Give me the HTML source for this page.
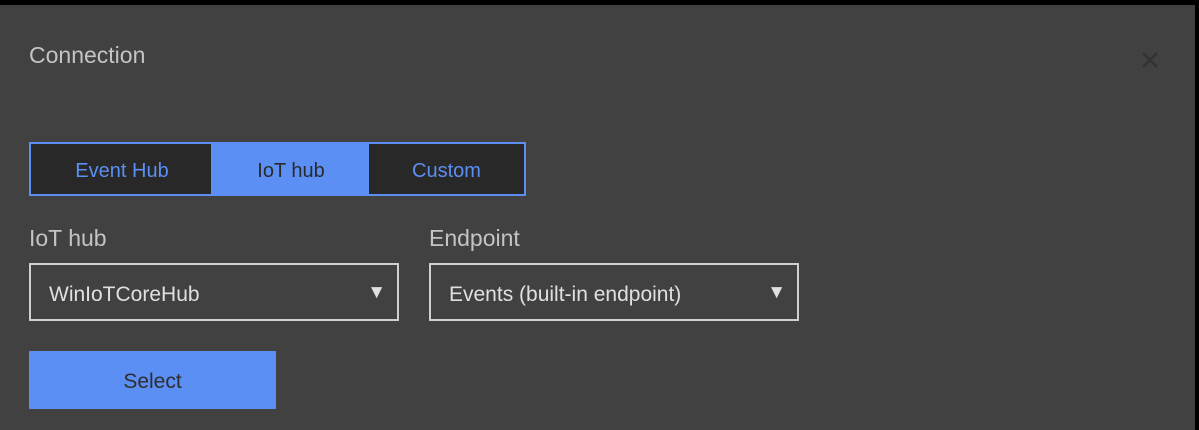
<!DOCTYPE html>
<html><head><style>
body{margin:0;width:1199px;height:430px;background:#000;overflow:hidden;font-family:"Liberation Sans",sans-serif}
.p{position:absolute;left:0;top:5px;width:1195px;height:425px;background:#414141}
.a{position:absolute}
.t{color:#c4c4c4;font-size:23px}
.tab{position:absolute;top:142px;height:54px;box-sizing:border-box;border:2px solid #5b8ff3;font-size:20px;line-height:54px;text-align:center;color:#5b8ff3;background:#282828}
.dd{position:absolute;top:263px;height:58px;width:370px;box-sizing:border-box;border:2px solid #cfcfcf;color:#e0e0e0;font-size:21px;line-height:59px;padding-left:18px}
.dd span{position:absolute;right:11px;top:-2px;font-size:19px}
</style></head><body>
<div class="p"></div>
<div class="a t" style="left:29px;top:42px;font-size:23px">Connection</div>
<svg class="a" style="left:1141px;top:51px" width="18" height="18"><path d="M2 2L16 16M16 2L2 16" stroke="#333" stroke-width="2.5"/></svg>
<div class="tab" style="left:29px;width:184px;border-right:none">Event Hub</div>
<div class="tab" style="left:211px;width:160px;background:#5b8ff3;color:#2a2a2a">IoT hub</div>
<div class="tab" style="left:369px;width:157px;border-left:none">Custom</div>
<div class="a t" style="left:29px;top:225px">IoT hub</div>
<div class="a t" style="left:429px;top:225px">Endpoint</div>
<div class="dd" style="left:29px">WinIoTCoreHub<span>▼</span></div>
<div class="dd" style="left:429px">Events (built-in endpoint)<span>▼</span></div>
<div class="a" style="left:29px;top:351px;width:247px;height:58px;background:#5b8ff3;color:#2e2e2e;font-size:21px;line-height:62px;text-align:center">Select</div>
</body></html>
